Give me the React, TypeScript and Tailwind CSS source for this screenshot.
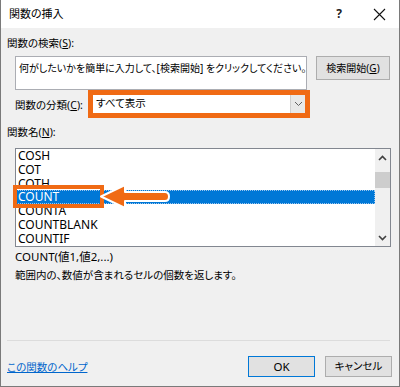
const FONT = "font-['Noto_Sans','Noto_Sans_CJK_JP',sans-serif] [font-feature-settings:'palt']";

const functionNames = ["COSH", "COT", "COTH", "COUNT", "COUNTA", "COUNTBLANK", "COUNTIF"];

const Chevron = ({ dir, light }: { dir: "up" | "down"; light?: boolean }) => (
	<svg width="9" height="6" viewBox="0 0 9 6" className="block">
		<path
			d={dir === "up" ? "M1 5 L4.5 1.5 L8 5" : "M1 1 L4.5 4.5 L8 1"}
			fill="none"
			stroke={light ? "#606060" : "#404040"}
			strokeWidth={light ? "1" : "1.6"}
		/>
	</svg>
);

const App = () => {
	return (
		<div
			className={`relative w-[400px] h-[387px] bg-[#f0f0f0] border-x border-b border-[#7a7a7a] text-black text-[10.5px] ${FONT}`}
		>
			{/* title bar */}
			<div className="h-[28px] bg-white flex items-center pl-[8px] pr-[10px]">
				<span className="text-[11px]">関数の挿入</span>
				<div className="ml-auto flex items-center">
					<span className="w-[20px] text-center text-[12px] font-bold text-[#222]">?</span>
					<span className="w-[20px] ml-[20px] flex justify-center">
						<svg width="13" height="13" viewBox="0 0 13 13">
							<path d="M1 1 L12 12 M12 1 L1 12" stroke="#111" strokeWidth="1.1" />
						</svg>
					</span>
				</div>
			</div>

			<div className="pl-[6px] pr-[7px]">
				<div className="mt-[7px] h-[16px] leading-[16px]">
					関数の検索(<span className="underline">S</span>):
				</div>

				<div className="mt-[5px] flex items-start">
					<div className="ml-[8px] w-[292px] h-[34px] bg-white border border-[#abadb3] pl-[3px] pt-[3px] leading-[16px] text-[10px] whitespace-nowrap overflow-hidden">
						何がしたいかを簡単に入力して、[検索開始] をクリックしてください。
					</div>
					<button className="ml-[9px] w-[74px] h-[24px] bg-[#e1e1e1] border border-[#adadad] leading-[16px] text-[10px] whitespace-nowrap">
						検索開始(<span className="underline">G</span>)
					</button>
				</div>

				<div className="flex items-center h-[28px]">
					<div className="ml-[8px] w-[73px] mt-[4px] whitespace-nowrap">
						関数の分類(<span className="underline">C</span>):
					</div>
					<div className="w-[222px] h-[28px] border-[5px] border-[#f06a14] bg-white flex items-center">
						<span className="pl-[3px] flex-1">すべて表示</span>
						<div className="w-[15px] h-full bg-[#e8e8e8] border-l border-[#cfcfcf] flex items-center justify-center">
							<Chevron dir="down" light />
						</div>
					</div>
				</div>

				<div className="mt-[6px] h-[16px] leading-[16px]">
					関数名(<span className="underline">N</span>):
				</div>

				<div className="mt-[8px] ml-[8px] w-[376px] h-[99px] bg-white border border-[#828790] flex">
					<ul className="flex-1 text-[12px]">
						{functionNames.map((name) => (
							<li
								key={name}
								className={
									name === "COUNT"
										? "h-[13.8px] leading-[13.8px] pl-[2px] bg-[#0078d7] text-white outline outline-1 outline-dotted outline-[#9bc6ee] -outline-offset-1"
										: "h-[13.8px] leading-[13.8px] pl-[2px]"
								}
							>
								{name}
							</li>
						))}
					</ul>
					<div className="w-[15px] bg-[#f0f0f0] flex flex-col items-center">
						<div className="h-[17px] flex items-center">
							<Chevron dir="up" />
						</div>
						<div className="mt-[6px] w-full h-[16px] bg-[#cdcdcd]" />
						<div className="mt-auto h-[17px] flex items-center">
							<Chevron dir="down" />
						</div>
					</div>
				</div>

				<div className="ml-[8px] mt-[2px] h-[16px] leading-[16px] text-[11.5px]">COUNT(値1,値2,...)</div>
				<div className="ml-[8px] mt-[2px] h-[16px] leading-[16px]">
					範囲内の、数値が含まれるセルの個数を返します。
				</div>

				<div className="mt-[57px] w-[383px] h-px bg-[#dcdcdc]" />

				<div className="mt-[15px] flex items-center">
					<a className="text-[#0066cc] underline leading-[16px]">この関数のヘルプ</a>
					<div className="ml-auto flex gap-[10px]">
						<button className="w-[67px] h-[21px] bg-[#e1e1e1] border border-[#0078d7] text-[11.5px]">OK</button>
						<button className="w-[67px] h-[21px] bg-[#e1e1e1] border border-[#adadad]">キャンセル</button>
					</div>
				</div>
			</div>

			{/* annotation: highlight box and arrow */}
			<div className="absolute left-[12px] top-[185px] w-[91px] h-[23px] border-4 border-[#f06a14]" />
			<svg className="absolute left-[96px] top-[181px]" width="76" height="32" viewBox="0 0 76 32">
				<path
					d="M4 15.5 L28 4 L28 11 L68 11 Q72 11 72 15.5 Q72 20 68 20 L28 20 L28 27 Z"
					fill="#f06a14"
					stroke="#ffffff"
					strokeWidth="2"
					strokeLinejoin="round"
				/>
			</svg>
		</div>
	);
};

export default App;
